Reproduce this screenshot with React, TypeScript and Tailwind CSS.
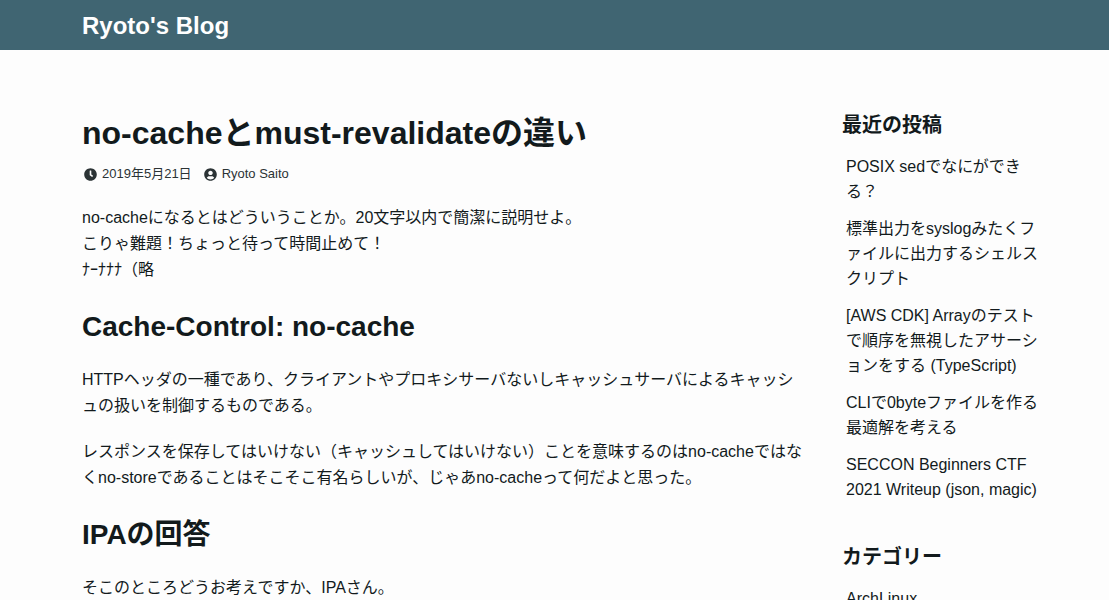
import { FaClock, FaUserCircle } from "react-icons/fa";

const posts = [
  "POSIX sedでなにができる？",
  "標準出力をsyslogみたくファイルに出力するシェルスクリプト",
  "[AWS CDK] Arrayのテストで順序を無視したアサーションをする (TypeScript)",
  "CLIで0byteファイルを作る最適解を考える",
  "SECCON Beginners CTF 2021 Writeup (json, magic)",
];

const categories = ["ArchLinux"];

function LinkList({ title, items }: { title: string; items: string[] }) {
  return (
    <section>
      <h2 className="text-xl leading-[30px] font-bold">{title}</h2>
      <ul className="mt-[14px] space-y-3 pl-1 leading-[25px]">
        {items.map((item) => (
          <li key={item}>
            <a href="#" className="block">{item}</a>
          </li>
        ))}
      </ul>
    </section>
  );
}

export default function App() {
  return (
    <div className="min-h-screen bg-[#fdfdfd] font-['Liberation_Sans','Noto_Sans_CJK_JP',sans-serif] text-base leading-[26px] text-[#121a1c]">
      <header className="bg-[#406572] px-[82px] pt-[9px] pb-[7px] text-white">
        <a href="#" className="block text-2xl leading-[34px] font-bold">Ryoto's Blog</a>
      </header>
      <div className="flex gap-10 pt-[60px] pr-[67px] pl-[82px]">
        <main className="min-w-0 flex-1">
          <article>
            <h1 className="text-[32px] leading-[46px] font-bold">no-cacheとmust-revalidateの違い</h1>
            <div className="mt-[6px] flex items-center gap-3 pl-[2px] text-[13px] leading-6 text-[#2b3335]">
              <span className="flex items-center gap-[5px]">
                <FaClock className="size-[13px]" />
                <time dateTime="2019-05-21">2019年5月21日</time>
              </span>
              <span className="flex items-center gap-[5px]">
                <FaUserCircle className="size-[13px]" />
                Ryoto Saito
              </span>
            </div>
            <p className="mt-[19px]">
              no-cacheになるとはどういうことか。20文字以内で簡潔に説明せよ。<br />
              こりゃ難題！ちょっと待って時間止めて！<br />
              ﾅｰﾅﾅﾅ（略
            </p>
            <h2 className="mt-6 text-[28px] leading-10 font-bold">Cache-Control: no-cache</h2>
            <p className="mt-5">
              HTTPヘッダの一種であり、クライアントやプロキシサーバないしキャッシュサーバによるキャッシュの扱いを制御するものである。
            </p>
            <p className="mt-5">
              レスポンスを保存してはいけない（キャッシュしてはいけない）ことを意味するのはno-cacheではなくno-storeであることはそこそこ有名らしいが、じゃあno-cacheって何だよと思った。
            </p>
            <h2 className="mt-6 text-[28px] leading-10 font-bold">IPAの回答</h2>
            <p className="mt-5">そこのところどうお考えですか、IPAさん。</p>
          </article>
        </main>
        <aside className="w-[200px] shrink-0 space-y-10">
          <LinkList title="最近の投稿" items={posts} />
          <LinkList title="カテゴリー" items={categories} />
        </aside>
      </div>
    </div>
  );
}
